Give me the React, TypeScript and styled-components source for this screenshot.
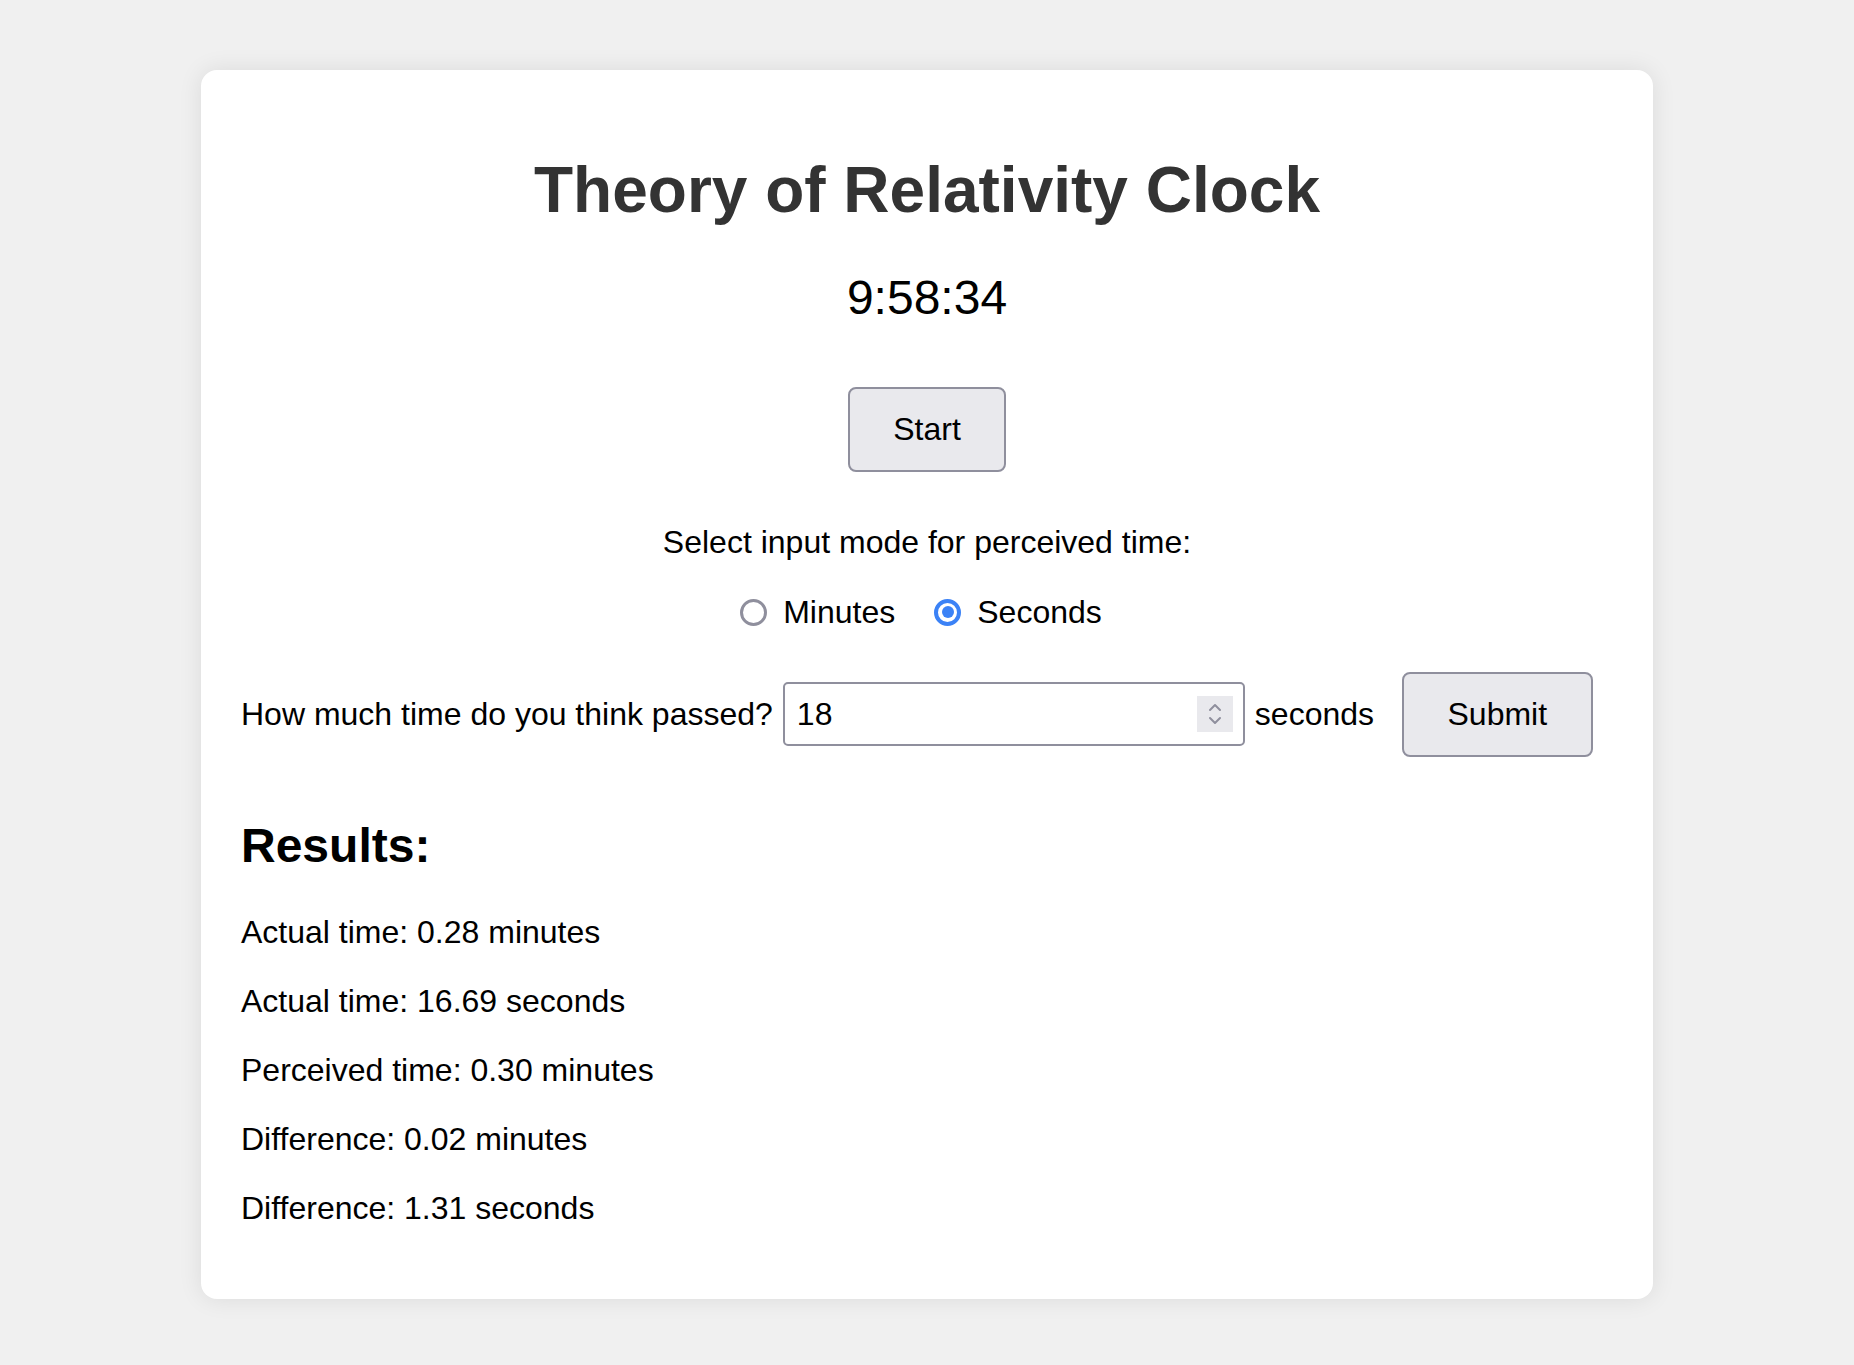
import React, { useState } from "react";
import styled, { createGlobalStyle } from "styled-components";

const Global = createGlobalStyle`
  html, body {
    margin: 0;
    padding: 0;
    background: #f0f0f0;
  }
  body {
    font-family: "Liberation Sans", Arial, sans-serif;
    color: #000;
  }
  * { box-sizing: border-box; }
`;

const Page = styled.div`
  padding: 70px 0 66px;
  min-height: 1365px;
`;

const Card = styled.div`
  width: 1452px;
  margin: 0 auto;
  background: #fff;
  border-radius: 16px;
  box-shadow: 0 0 24px rgba(0, 0, 0, 0.09);
  padding: 84px 40px 73px;
  display: flex;
  flex-direction: column;
`;

const Title = styled.h1`
  margin: 0;
  font-size: 64px;
  line-height: 1.15;
  font-weight: 700;
  color: #333;
  text-align: center;
`;

const ClockText = styled.div`
  margin-top: 42px;
  font-size: 48px;
  line-height: 1.15;
  text-align: center;
`;

const Button = styled.button`
  font-family: "Liberation Sans", Arial, sans-serif;
  font-size: 32px;
  line-height: 1.15;
  color: #000;
  background: #e9e9ed;
  border: 2px solid #8f8f9d;
  border-radius: 8px;
  height: 85px;
  padding: 0 43.5px;
  cursor: pointer;
`;

const CenterRow = styled.div<{ $mt: number; $pr?: number }>`
  display: flex;
  justify-content: center;
  align-items: center;
  margin-top: ${(p) => p.$mt}px;
  padding-right: ${(p) => p.$pr ?? 0}px;
`;

const Text = styled.div`
  font-size: 32px;
  line-height: 1.15;
`;

const RadioLabel = styled.label`
  display: flex;
  align-items: center;
  font-size: 32px;
  line-height: 1.15;
  cursor: pointer;
  & + & {
    margin-left: 39px;
  }
`;

const Radio = styled.input`
  appearance: none;
  -webkit-appearance: none;
  width: 27px;
  height: 27px;
  margin: 0 16px 0 0;
  border-radius: 50%;
  border: 3px solid #8f8f9d;
  background: #fff;
  display: grid;
  place-items: center;
  &:checked {
    border: 4px solid #3b82f6;
  }
  &:checked::after {
    content: "";
    width: 12px;
    height: 12px;
    border-radius: 50%;
    background: #3b82f6;
  }
`;

const InputRow = styled.div`
  display: flex;
  align-items: center;
  margin-top: 41px;
  font-size: 32px;
  line-height: 1.15;
`;

const NumberBox = styled.div`
  display: flex;
  align-items: center;
  width: 462px;
  height: 64px;
  margin: 0 10px 0 10px;
  border: 2px solid #8f8f9d;
  border-radius: 5px;
  padding: 0 10px 0 12px;
`;

const NumberField = styled.input`
  flex: 1;
  min-width: 0;
  border: none;
  outline: none;
  font-family: "Liberation Sans", Arial, sans-serif;
  font-size: 32px;
  line-height: 1.15;
  padding: 0;
  color: #000;
  background: transparent;
`;

const Stepper = styled.div`
  width: 36px;
  height: 36px;
  background: #e9e9ed;
  display: flex;
  align-items: center;
  justify-content: center;
`;

const Unit = styled.span`
  margin-right: 28px;
`;

const ResultsHeading = styled.h2`
  margin: 61px 0 0;
  font-size: 48px;
  line-height: 1.15;
  font-weight: 700;
`;

const ResultLine = styled.p`
  margin: 32.2px 0 0;
  font-size: 32px;
  line-height: 1.15;
  &:first-of-type {
    margin-top: 40.5px;
  }
`;

const Results = styled.div`
  display: flex;
  flex-direction: column;
`;

export default function App() {
  const [mode, setMode] = useState("seconds");
  const [value, setValue] = useState("18");

  return (
    <>
      <Global />
      <Page>
        <Card>
          <Title>Theory of Relativity Clock</Title>
          <ClockText>9:58:34</ClockText>
          <CenterRow $mt={62}>
            <Button>Start</Button>
          </CenterRow>
          <CenterRow $mt={52.5}>
            <Text>Select input mode for perceived time:</Text>
          </CenterRow>
          <CenterRow $mt={33} $pr={12}>
            <RadioLabel>
              <Radio
                type="radio"
                name="mode"
                checked={mode === "minutes"}
                onChange={() => setMode("minutes")}
              />
              Minutes
            </RadioLabel>
            <RadioLabel>
              <Radio
                type="radio"
                name="mode"
                checked={mode === "seconds"}
                onChange={() => setMode("seconds")}
              />
              Seconds
            </RadioLabel>
          </CenterRow>
          <InputRow>
            <span>How much time do you think passed?</span>
            <NumberBox>
              <NumberField value={value} onChange={(e) => setValue(e.target.value)} />
              <Stepper>
                <svg width="18" height="28" viewBox="0 0 18 28" fill="none" stroke="#8f8f9d" strokeWidth="2" strokeLinecap="round" strokeLinejoin="round">
                  <polyline points="4,10 9,5 14,10" />
                  <polyline points="4,18 9,23 14,18" />
                </svg>
              </Stepper>
            </NumberBox>
            <Unit>seconds</Unit>
            <Button>Submit</Button>
          </InputRow>
          <Results>
            <ResultsHeading>Results:</ResultsHeading>
            <ResultLine>Actual time: 0.28 minutes</ResultLine>
            <ResultLine>Actual time: 16.69 seconds</ResultLine>
            <ResultLine>Perceived time: 0.30 minutes</ResultLine>
            <ResultLine>Difference: 0.02 minutes</ResultLine>
            <ResultLine>Difference: 1.31 seconds</ResultLine>
          </Results>
        </Card>
      </Page>
    </>
  );
}
